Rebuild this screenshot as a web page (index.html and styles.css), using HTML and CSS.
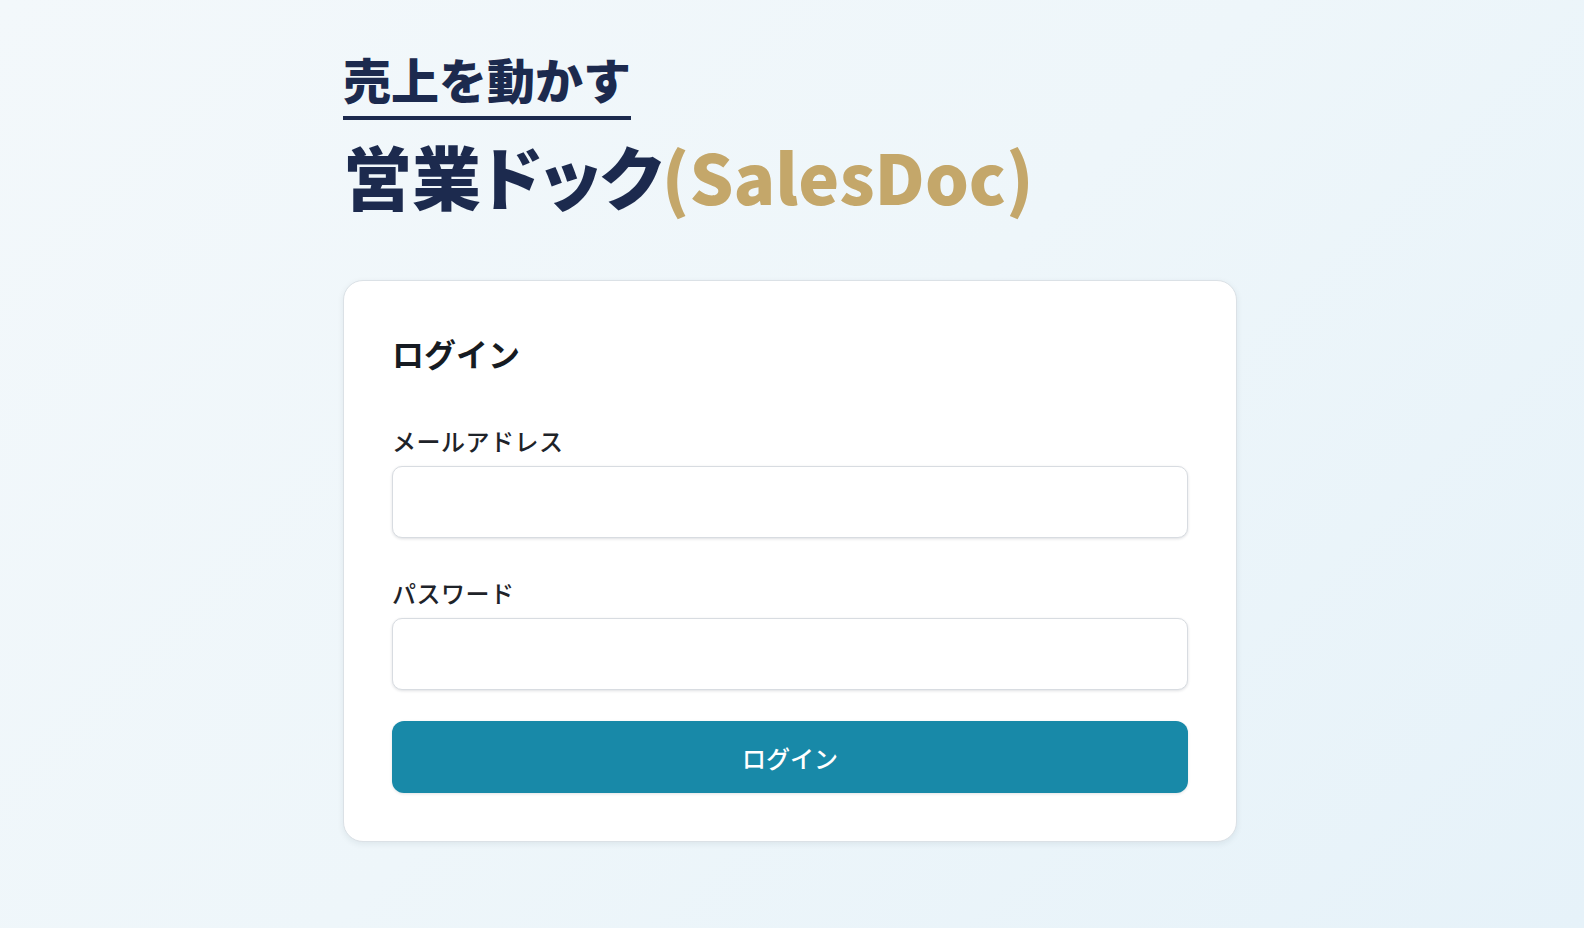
FILE: index.html
```html
<!DOCTYPE html>
<html lang="ja">
<head>
<meta charset="utf-8">
<title>営業ドック(SalesDoc) ログイン</title>
<link rel="stylesheet" href="styles.css">
</head>
<body>
<main class="page">
  <header class="brand">
    <p class="tagline">売上を動かす</p>
    <h1 class="title">営業ドック<span class="title-en">(SalesDoc)</span></h1>
  </header>
  <section class="card">
    <h2 class="card-title">ログイン</h2>
    <form class="form">
      <div class="field">
        <label class="label" for="email">メールアドレス</label>
        <input class="input" id="email" type="email">
      </div>
      <div class="field">
        <label class="label" for="password">パスワード</label>
        <input class="input" id="password" type="password">
      </div>
      <button class="button" type="button">ログイン</button>
    </form>
  </section>
</main>
</body>
</html>
```
FILE: styles.css
```css
* { box-sizing: border-box; }
html, body { margin: 0; height: 100%; }
body {
  font-family: "Noto Sans CJK JP", "Noto Sans", sans-serif;
  background: linear-gradient(135deg, #f3f8fb 0%, #eef6fa 50%, #e6f2f9 100%);
  color: #1a1f27;
  padding-right: 4px;
}
.page {
  width: 894px;
  margin: 0 auto;
  padding-top: 50px;
}
.brand { margin-bottom: 64px; }
.tagline {
  display: inline-block;
  margin: 0;
  font-size: 48px;
  font-weight: 900;
  line-height: 1.2;
  color: #1c2a4e;
  padding-bottom: 8px;
  border-bottom: 4px solid #1c2a4e;
}
.title {
  margin: 14px 0 0;
  font-size: 69px;
  font-weight: 900;
  line-height: 1.2;
  color: #1c2a4e;
  font-feature-settings: "palt";
}
.title-en { color: #c4a76a; }
.card {
  background: #fff;
  border: 1px solid #dbe1e6;
  border-radius: 20px;
  box-shadow: 0 2px 6px rgba(30, 50, 70, 0.08);
  padding: 48px;
}
.card-title {
  margin: 0 0 46px;
  font-size: 32px;
  font-weight: 700;
  line-height: 1.5;
  color: #161b22;
}
.form { display: flex; flex-direction: column; }
.field { display: flex; flex-direction: column; margin-bottom: 37px; }
.field + .field { margin-bottom: 31px; }
.label {
  font-size: 24px;
  font-weight: 500;
  line-height: 1.5;
  margin-bottom: 7px;
  color: #1e2329;
  letter-spacing: 0.02em;
}
.input {
  height: 72px;
  border: 1px solid #d8dce1;
  border-radius: 10px;
  background: #fff;
  box-shadow: 0 1px 3px rgba(20, 30, 50, 0.14);
  font-size: 24px;
  padding: 0 16px;
  font-family: inherit;
}
.button {
  height: 72px;
  border: none;
  border-radius: 12px;
  background: #1889a8;
  color: #fff;
  font-family: inherit;
  font-size: 24px;
  font-weight: 500;
  box-shadow: 0 1px 3px rgba(20, 30, 50, 0.12);
}
```
